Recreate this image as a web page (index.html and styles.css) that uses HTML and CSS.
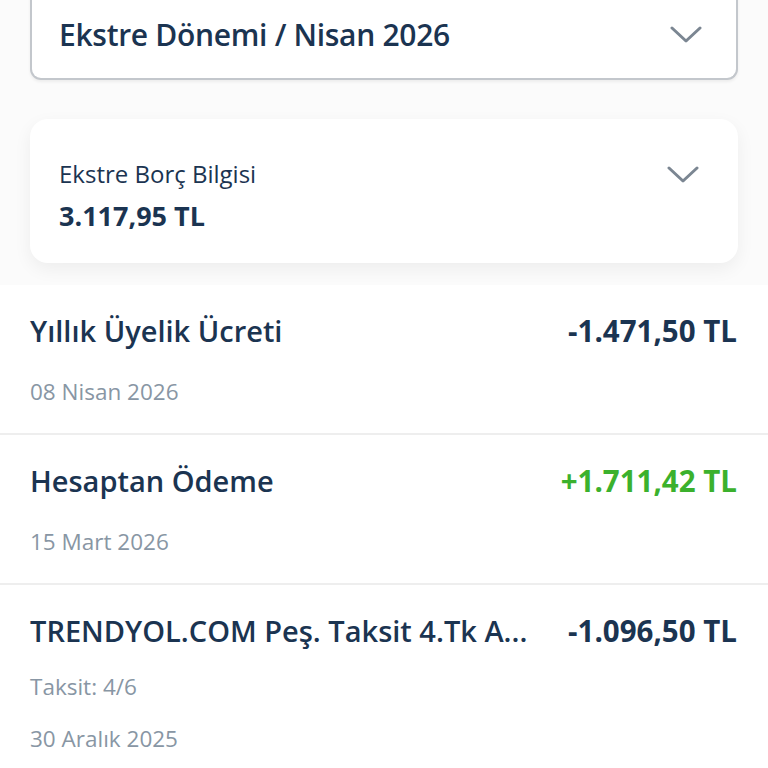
FILE: index.html
```html
<!DOCTYPE html>
<html lang="tr">

<head>
    <meta charset="UTF-8">
    <meta name="viewport" content="width=device-width, initial-scale=1.0">
    <title>Ekstre</title>
    <link rel="stylesheet" href="styles.css">
</head>

<body>
    <div class="top">
        <div class="period">
            <span class="period-label">Ekstre Dönemi / Nisan 2026</span>
            <svg class="chevron" width="32" height="18" viewBox="0 0 32 18">
                <path d="M2 2 L16 15 L30 2" fill="none" stroke="#7b8692" stroke-width="3" stroke-linecap="round" stroke-linejoin="round" />
            </svg>
        </div>

        <div class="debt-card">
            <div class="debt-info">
                <div class="debt-title">Ekstre Borç Bilgisi</div>
                <div class="debt-amount">3.117,95 TL</div>
            </div>
            <svg class="chevron small" width="32" height="18" viewBox="0 0 32 18">
                <path d="M2 2 L16 15 L30 2" fill="none" stroke="#7b8692" stroke-width="3" stroke-linecap="round" stroke-linejoin="round" />
            </svg>
        </div>
    </div>

    <ul class="transactions">
        <li class="tx">
            <div class="tx-head">
                <span class="tx-name">Yıllık Üyelik Ücreti</span>
                <span class="tx-amount">-1.471,50 TL</span>
            </div>
            <div class="tx-sub">08 Nisan 2026</div>
        </li>
        <li class="tx">
            <div class="tx-head">
                <span class="tx-name">Hesaptan Ödeme</span>
                <span class="tx-amount plus">+1.711,42 TL</span>
            </div>
            <div class="tx-sub">15 Mart 2026</div>
        </li>
        <li class="tx">
            <div class="tx-head">
                <span class="tx-name">TRENDYOL.COM Peş. Taksit 4.Tk A...</span>
                <span class="tx-amount">-1.096,50 TL</span>
            </div>
            <div class="tx-sub installment">Taksit: 4/6</div>
            <div class="tx-sub close">30 Aralık 2025</div>
        </li>
    </ul>
</body>

</html>
```

FILE: styles.css
```css
html {
    background: #fff;
}

body {
    margin: 0;
    font-family: "Open Sans", "Noto Sans", sans-serif;
    color: #1b3451;
    overflow: hidden;
}

.top {
    background: #fbfbfb;
    padding: 0 30px 22px;
}

.period {
    margin-top: -9px;
    height: 89px;
    box-sizing: border-box;
    border: 2px solid #c3c7cc;
    border-top: none;
    border-radius: 0 0 11px 11px;
    background: #fff;
    display: flex;
    align-items: center;
    justify-content: space-between;
    padding: 0 34px 0 27px;
    box-shadow: 0 2px 3px rgba(0, 0, 0, 0.06);
}

.period-label {
    font-size: 30px;
    font-weight: 600;
    letter-spacing: -0.3px;
}

.chevron {
    display: block;
}

.debt-card {
    margin-top: 39px;
    height: 144px;
    box-sizing: border-box;
    background: #fff;
    border-radius: 18px;
    box-shadow: 0 6px 18px rgba(0, 0, 0, 0.06);
    display: flex;
    justify-content: space-between;
    align-items: flex-start;
    padding: 40px 39px 0 29px;
}

.debt-card .chevron {
    margin-top: 7px;
}

.debt-title {
    font-size: 24px;
    font-weight: 500;
    line-height: 30px;
}

.debt-amount {
    margin-top: 12px;
    font-size: 27px;
    font-weight: 700;
    line-height: 30px;
}

.transactions {
    list-style: none;
    margin: 0;
    padding: 0;
}

.tx {
    padding: 27px 31px 26px 30px;
    border-bottom: 2px solid #eeeeee;
}

.tx-head {
    display: flex;
    justify-content: space-between;
    align-items: center;
    gap: 20px;
    line-height: 38px;
}

.tx-name {
    font-size: 29px;
    font-weight: 600;
    white-space: nowrap;
}

.tx-amount {
    font-size: 29.5px;
    font-weight: 700;
    white-space: nowrap;
}

.tx-amount.plus {
    color: #3bb12d;
}

.tx-sub {
    margin-top: 27px;
    font-size: 22.5px;
    line-height: 30px;
    color: #8896a4;
}

.tx-sub.installment {
    margin-top: 22px;
}

.tx-sub.close {
    margin-top: 22px;
}
```
